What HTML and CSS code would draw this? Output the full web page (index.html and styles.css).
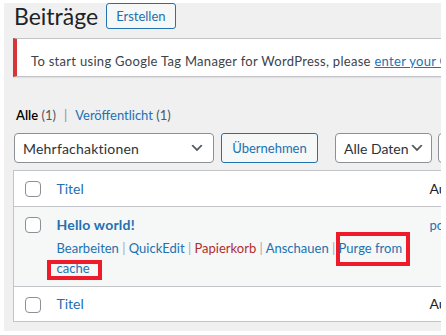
FILE: index.html
```html
<!DOCTYPE html>
<html lang="de">
<head>
  <meta charset="UTF-8" />
  <title>Beiträge</title>
  <link rel="stylesheet" href="styles.css">
</head>
<body>
  <div class="screen">

    <!-- Page title -->
    <div class="page-head">
      <h1>Beiträge</h1>
      <a class="button" href="#">Erstellen</a>
    </div>

    <!-- GTM notice -->
    <div class="notice">
      To start using Google Tag Manager for WordPress, please&nbsp;<a href="#">enter your GTM ID</a>
    </div>

    <ul class="subsubsub">
      <li><span class="current">Alle</span> <span class="count">(1)</span></li>
      <li class="sep">|</li>
      <li><a href="#">Veröffentlicht</a> <span class="count">(1)</span></li>
    </ul>

    <!-- Bulk actions -->
    <div class="tablenav">
      <div class="select bulk">
        <span>Mehrfachaktionen</span>
        <svg viewBox="0 0 20 20" width="16" height="16"><path d="M5 6l5 5 5-5 2 1-7 7-7-7 2-1z"/></svg>
      </div>
      <a class="button apply" href="#">Übernehmen</a>
      <div class="select dates">
        <span>Alle Daten</span>
        <svg viewBox="0 0 20 20" width="16" height="16"><path d="M5 6l5 5 5-5 2 1-7 7-7-7 2-1z"/></svg>
      </div>
      <div class="select cats">
        <span>Alle Kategorien</span>
      </div>
    </div>

    <table class="posts">
      <colgroup>
        <col class="col-cb">
        <col class="col-title">
        <col class="col-author">
      </colgroup>
      <thead>
        <tr>
          <td class="cb"><span class="checkbox"></span></td>
          <th class="title"><a href="#">Titel</a></th>
          <th class="author">Autor</th>
        </tr>
      </thead>
      <tbody>
        <tr class="odd">
          <td class="cb"><span class="checkbox"></span></td>
          <td class="title">
            <a class="row-title" href="#">Hello world!</a>
            <div class="row-actions">
              <a href="#">Bearbeiten</a> <span class="sep">|</span>
              <a href="#">QuickEdit</a> <span class="sep">|</span>
              <a class="trash" href="#">Papierkorb</a> <span class="sep">|</span>
              <a href="#">Anschauen</a> <span class="sep">|</span>
              <a href="#">Purge from cache</a>
            </div>
          </td>
          <td class="author"><a href="#">post-author</a></td>
        </tr>
      </tbody>
      <tfoot>
        <tr>
          <td class="cb"><span class="checkbox"></span></td>
          <th class="title"><a href="#">Titel</a></th>
          <th class="author">Autor</th>
        </tr>
      </tfoot>
    </table>

    <!-- Screenshot markings -->
    <div class="mark mark-purge"></div>
    <div class="mark mark-cache"></div>
  </div>
</body>
</html>
```

FILE: styles.css
```css
body {
  margin: 0;
  background: #fff;
  font-family: Lato, "Open Sans", sans-serif;
  font-size: 13px;
  color: #3c434a;
}

a {
  color: #2271b1;
  text-decoration: none;
}

.screen {
  position: relative;
  width: 437px;
  height: 328px;
  margin: 3px 0 0 4px;
  background: #f0f0f1;
  overflow: hidden;
}

.page-head {
  display: flex;
  align-items: center;
  height: 26px;
  padding-left: 10px;
}

h1 {
  margin: 0 8px 0 0;
  font-size: 23px;
  font-weight: 400;
  line-height: 26px;
  color: #1d2327;
}

.button {
  display: inline-block;
  box-sizing: border-box;
  height: 26px;
  padding: 0 9px;
  line-height: 24px;
  border: 1px solid #2271b1;
  border-radius: 3px;
  background: #f6f7f7;
  color: #2271b1;
  font-size: 13px;
  white-space: nowrap;
}

.notice {
  display: flex;
  align-items: center;
  box-sizing: border-box;
  width: 600px;
  height: 39px;
  margin: 9px 0 0 9px;
  padding: 6px 0 0 14px;
  background: #fff;
  border: 1px solid #c3c4c7;
  border-left: 4px solid #d63638;
  box-shadow: 0 1px 1px rgba(0,0,0,0.06);
  white-space: nowrap;
  letter-spacing: 0.3px;
  color: #3c434a;
}

.notice a {
  text-decoration: underline;
}

.subsubsub {
  display: flex;
  gap: 4px;
  list-style: none;
  margin: 28px 0 0 12px;
  padding: 0;
  line-height: 20px;
}

.subsubsub .current {
  color: #000;
  font-weight: 600;
}

.subsubsub .count {
  color: #50575e;
}

.subsubsub .sep {
  color: #8c8f94;
  margin: 0 4px;
}

.tablenav {
  display: flex;
  align-items: center;
  height: 30px;
  margin: 8px 0 0 10px;
  white-space: nowrap;
}

.select {
  display: flex;
  align-items: center;
  justify-content: space-between;
  flex-shrink: 0;
  box-sizing: border-box;
  height: 30px;
  padding: 0 8px;
  border: 1px solid #8c8f94;
  border-radius: 4px;
  background: #fff;
  color: #2c3338;
  font-size: 14px;
  letter-spacing: 0.2px;
}

.select svg {
  flex-shrink: 0;
  fill: #50575e;
}

.bulk {
  width: 200px;
  margin-right: 7px;
}

.apply {
  flex-shrink: 0;
  width: 97px;
  height: 30px;
  line-height: 28px;
  text-align: center;
  padding: 0;
  margin-right: 17px;
}

.dates {
  width: 97px;
  margin-right: 6px;
  padding-right: 6px;
  letter-spacing: 0;
}

.cats {
  width: 150px;
}

.posts {
  width: 600px;
  margin: 7px 0 0 9px;
  border-collapse: collapse;
  table-layout: fixed;
  background: #fff;
  border: 1px solid #c3c4c7;
}

.col-cb {
  width: 33px;
}

.col-title {
  width: 375px;
}

.posts th,
.posts td {
  padding: 8px 8px 7px 10px;
  text-align: left;
  vertical-align: top;
  font-weight: 400;
  line-height: 20px;
  font-size: 14px;
}

.posts thead th,
.posts thead td {
  border-bottom: 1px solid #c3c4c7;
}

.posts tfoot th,
.posts tfoot td {
  border-top: 1px solid #c3c4c7;
  padding-top: 7px;
}

.posts th.author {
  color: #1d2327;
  padding-left: 8px;
}

.posts td.author {
  padding-left: 8px;
  font-size: 13px;
}

.posts td.cb {
  padding: 10px 0 0 11px;
}

.checkbox {
  display: block;
  box-sizing: border-box;
  width: 16px;
  height: 16px;
  border: 1px solid #8c8f94;
  border-radius: 4px;
  background: #fff;
}

.odd td {
  background: #f6f7f7;
  padding-bottom: 8px;
}

.row-title {
  font-weight: 700;
  font-size: 14px;
  letter-spacing: 0.2px;
}

.row-actions {
  margin-top: 3px;
  font-size: 13px;
  line-height: 20px;
}

.row-actions .sep {
  color: #a7aaad;
}

.row-actions .trash {
  color: #b32d2e;
}

/* red boxes drawn over the screenshot */
.mark {
  position: absolute;
  box-sizing: border-box;
  border: 4px solid #ee1c2a;
}

.mark-purge {
  left: 332px;
  top: 229px;
  width: 74px;
  height: 34px;
}

.mark-cache {
  left: 43px;
  top: 257px;
  width: 55px;
  height: 20px;
}
```
